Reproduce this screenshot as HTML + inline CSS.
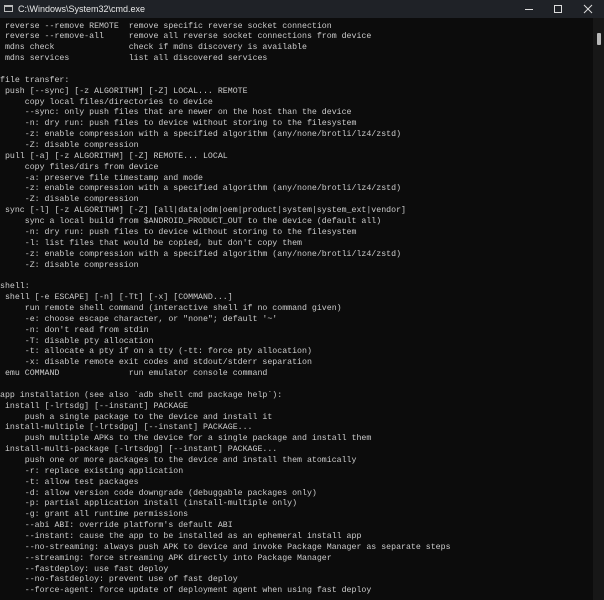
<!DOCTYPE html>
<html><head><style>
html,body{margin:0;padding:0;}
body{width:604px;height:600px;background:#0c0c0c;overflow:hidden;position:relative;font-family:"Liberation Sans",sans-serif;}
.title{position:absolute;left:0;top:0;width:604px;height:18px;background:#1f2227;}
.title .t{position:absolute;left:18px;top:4px;font-size:9px;color:#e8e8e8;}
.ico{position:absolute;left:4px;top:5px;width:9px;height:7px;border:1px solid #bbb;box-sizing:border-box;}
.ico:after{content:"";position:absolute;left:0;top:0;width:7px;height:1px;background:#bbb;}
pre{position:absolute;left:0;top:21.6px;margin:0;font-family:"Liberation Mono",monospace;font-size:8.25px;line-height:10.865px;color:#cccccc;white-space:pre;}
.sb{position:absolute;right:0;top:18px;width:11px;height:582px;background:#171717;}
.thumb{position:absolute;left:4px;top:15px;width:4px;height:12px;background:#b8b8b8;border-radius:1px;}
</style></head><body>
<div class="title"><div class="ico"></div><div class="t">C:\Windows\System32\cmd.exe</div>
<svg style="position:absolute;left:510px;top:0" width="94" height="18"><line x1="15" y1="9.5" x2="23" y2="9.5" stroke="#ddd" stroke-width="1"/><rect x="44.5" y="5.5" width="7" height="7" fill="none" stroke="#ddd"/><line x1="74" y1="5" x2="82" y2="13" stroke="#ddd"/><line x1="82" y1="5" x2="74" y2="13" stroke="#ddd"/></svg>
</div>
<pre> reverse --remove REMOTE  remove specific reverse socket connection
 reverse --remove-all     remove all reverse socket connections from device
 mdns check               check if mdns discovery is available
 mdns services            list all discovered services

file transfer:
 push [--sync] [-z ALGORITHM] [-Z] LOCAL... REMOTE
     copy local files/directories to device
     --sync: only push files that are newer on the host than the device
     -n: dry run: push files to device without storing to the filesystem
     -z: enable compression with a specified algorithm (any/none/brotli/lz4/zstd)
     -Z: disable compression
 pull [-a] [-z ALGORITHM] [-Z] REMOTE... LOCAL
     copy files/dirs from device
     -a: preserve file timestamp and mode
     -z: enable compression with a specified algorithm (any/none/brotli/lz4/zstd)
     -Z: disable compression
 sync [-l] [-z ALGORITHM] [-Z] [all|data|odm|oem|product|system|system_ext|vendor]
     sync a local build from $ANDROID_PRODUCT_OUT to the device (default all)
     -n: dry run: push files to device without storing to the filesystem
     -l: list files that would be copied, but don't copy them
     -z: enable compression with a specified algorithm (any/none/brotli/lz4/zstd)
     -Z: disable compression

shell:
 shell [-e ESCAPE] [-n] [-Tt] [-x] [COMMAND...]
     run remote shell command (interactive shell if no command given)
     -e: choose escape character, or "none"; default '~'
     -n: don't read from stdin
     -T: disable pty allocation
     -t: allocate a pty if on a tty (-tt: force pty allocation)
     -x: disable remote exit codes and stdout/stderr separation
 emu COMMAND              run emulator console command

app installation (see also `adb shell cmd package help`):
 install [-lrtsdg] [--instant] PACKAGE
     push a single package to the device and install it
 install-multiple [-lrtsdpg] [--instant] PACKAGE...
     push multiple APKs to the device for a single package and install them
 install-multi-package [-lrtsdpg] [--instant] PACKAGE...
     push one or more packages to the device and install them atomically
     -r: replace existing application
     -t: allow test packages
     -d: allow version code downgrade (debuggable packages only)
     -p: partial application install (install-multiple only)
     -g: grant all runtime permissions
     --abi ABI: override platform's default ABI
     --instant: cause the app to be installed as an ephemeral install app
     --no-streaming: always push APK to device and invoke Package Manager as separate steps
     --streaming: force streaming APK directly into Package Manager
     --fastdeploy: use fast deploy
     --no-fastdeploy: prevent use of fast deploy
     --force-agent: force update of deployment agent when using fast deploy</pre>
<div class="sb"><div class="thumb"></div></div>
</body></html>
